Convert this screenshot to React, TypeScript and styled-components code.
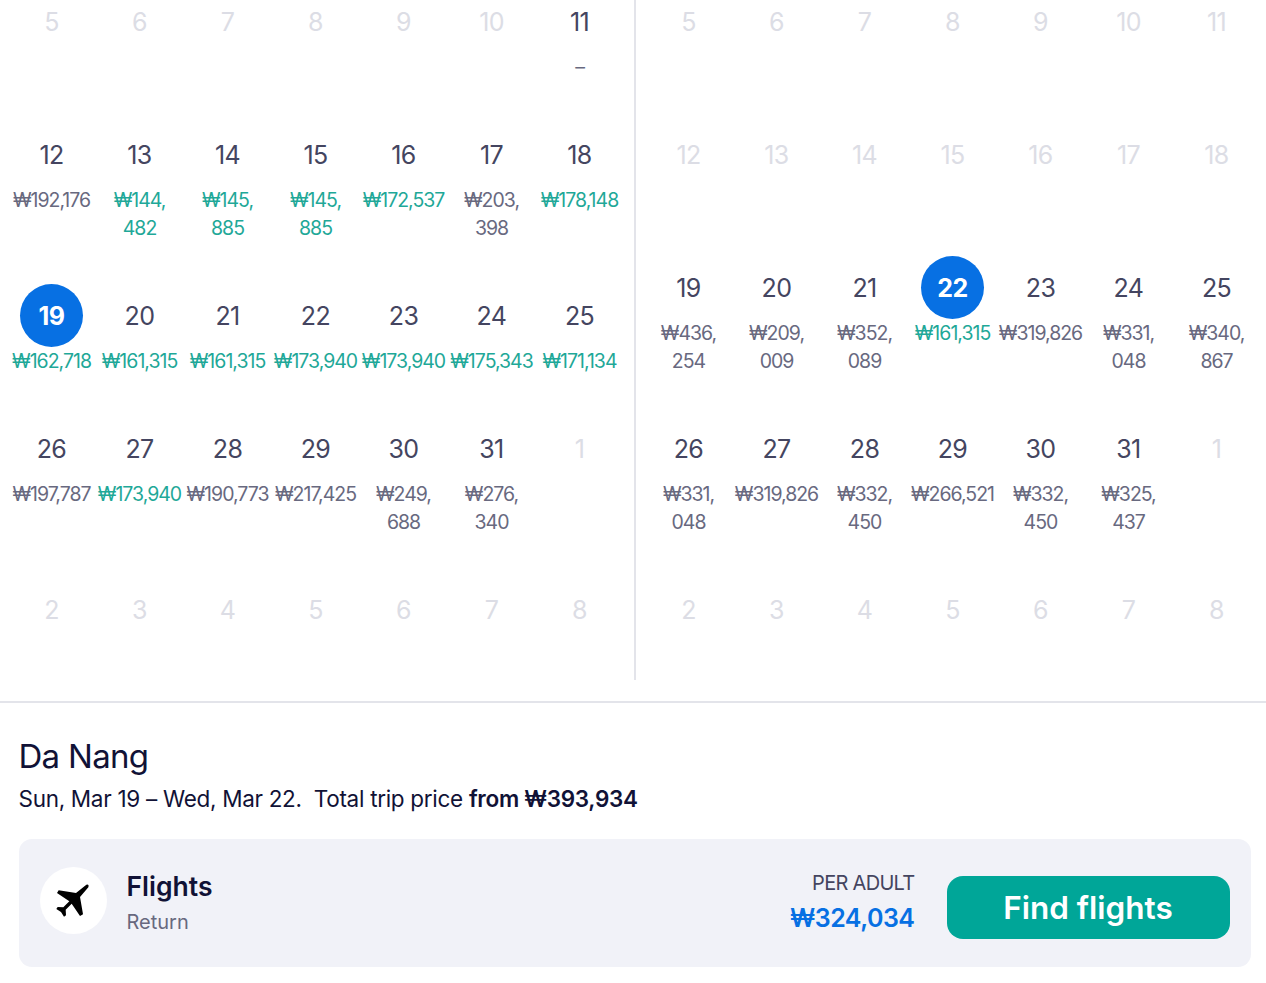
import React from "react";
import styled, { createGlobalStyle } from "styled-components";

const Global = createGlobalStyle`
  html, body { margin: 0; padding: 0; background: #fff; overflow: hidden; }
  body { font-family: "Inter", "Liberation Sans", sans-serif; color: #111236; }
`;

const Page = styled.div`
  width: 1266px;
  height: 983px;
  overflow: hidden;
`;

const Calendars = styled.div`
  display: flex;
  height: 690px;
  margin-top: -10px;
`;

const Month = styled.div<{ $divider?: boolean }>`
  width: 636px;
  height: 690px;
  box-sizing: border-box;
  padding-left: ${(p) => (p.$divider ? "7.5px" : "9.5px")};
  flex: none;
  overflow: hidden;
  border-right: ${(p) => (p.$divider ? "2px solid #e3e4ea" : "none")};
  margin-right: ${(p) => (p.$divider ? "-1px" : "0")};
`;

const Week = styled.div`
  display: grid;
  grid-template-columns: repeat(7, 88px);
  align-content: start;
  box-sizing: border-box;
  min-height: 133px;
  padding-bottom: 42px;
`;

const Day = styled.div`
  display: flex;
  flex-direction: column;
  align-items: center;
`;

const DayNumber = styled.div<{ $state: "off" | "on" | "selected" }>`
  width: 63px;
  height: 63px;
  border-radius: 50%;
  display: flex;
  align-items: center;
  justify-content: center;
  font-size: 25px;
  letter-spacing: -0.6px;
  font-weight: ${(p) => (p.$state === "selected" ? 700 : 400)};
  color: ${(p) =>
    p.$state === "off" ? "#dcdde5" : p.$state === "selected" ? "#fff" : "#444560"};
  background: ${(p) => (p.$state === "selected" ? "#0770e3" : "transparent")};
`;

const Price = styled.div<{ $low?: boolean }>`
  font-size: 19.5px;
  line-height: 28px;
  letter-spacing: -1px;
  white-space: nowrap;
  text-align: center;
  color: ${(p) => (p.$low ? "#1fa898" : "#68697f")};
`;

const Rule = styled.div`
  height: 2px;
  background: #e3e4ea;
  margin-top: 21px;
`;

const Summary = styled.section`
  padding: 31px 16px 0 18.5px;
`;

const City = styled.h2`
  margin: 0;
  font-size: 33px;
  line-height: 44px;
  font-weight: 400;
  letter-spacing: -0.7px;
`;

const Dates = styled.p`
  margin: 5px 0 0;
  font-size: 22.5px;
  line-height: 32px;
  letter-spacing: -0.3px;
  white-space: pre;
  strong { font-weight: 600; }
`;

const Card = styled.div`
  width: 1232px;
  height: 128px;
  margin-top: 24px;
  box-sizing: border-box;
  padding: 0 21px;
  background: #f1f2f8;
  border-radius: 13px;
  display: flex;
  align-items: center;
`;

const IconCircle = styled.div`
  width: 67px;
  height: 67px;
  margin-top: -6px;
  border-radius: 50%;
  background: #fff;
  display: flex;
  align-items: center;
  justify-content: center;
  flex: none;
`;

const Info = styled.div`
  margin-left: 20px;
  flex: 1;
`;

const InfoTitle = styled.div`
  font-size: 26.5px;
  line-height: 34px;
  font-weight: 600;
`;

const InfoSub = styled.div`
  font-size: 20px;
  line-height: 32px;
  margin-top: 3px;
  color: #68697f;
`;

const PriceBlock = styled.div`
  text-align: right;
  margin-right: 32px;
`;

const PerAdult = styled.div`
  font-size: 20px;
  line-height: 30px;
  letter-spacing: -0.7px;
  color: #444560;
`;

const Total = styled.div`
  font-size: 25px;
  line-height: 40px;
  font-weight: 600;
  letter-spacing: -0.5px;
  color: #0770e3;
`;

const FindButton = styled.button`
  width: 283px;
  height: 63px;
  margin-top: 8px;
  border: none;
  border-radius: 16px;
  background: #00a698;
  color: #fff;
  font-family: inherit;
  font-size: 31.5px;
  font-weight: 600;
  padding: 0;
`;

type Cell = { n: number; off?: boolean; sel?: boolean; low?: boolean; p?: string[] };

const off = (ns: number[]): Cell[] => ns.map((n) => ({ n, off: true }));
const c = (n: number, p: string, low = false, sel = false): Cell => ({
  n,
  low,
  sel,
  p: p.split("|"),
});

const left: Cell[][] = [
  [...off([5, 6, 7, 8, 9, 10]), c(11, "–")],
  [
    c(12, "₩192,176"),
    c(13, "₩144,|482", true),
    c(14, "₩145,|885", true),
    c(15, "₩145,|885", true),
    c(16, "₩172,537", true),
    c(17, "₩203,|398"),
    c(18, "₩178,148", true),
  ],
  [
    c(19, "₩162,718", true, true),
    c(20, "₩161,315", true),
    c(21, "₩161,315", true),
    c(22, "₩173,940", true),
    c(23, "₩173,940", true),
    c(24, "₩175,343", true),
    c(25, "₩171,134", true),
  ],
  [
    c(26, "₩197,787"),
    c(27, "₩173,940", true),
    c(28, "₩190,773"),
    c(29, "₩217,425"),
    c(30, "₩249,|688"),
    c(31, "₩276,|340"),
    ...off([1]),
  ],
  off([2, 3, 4, 5, 6, 7, 8]),
];

const right: Cell[][] = [
  off([5, 6, 7, 8, 9, 10, 11]),
  off([12, 13, 14, 15, 16, 17, 18]),
  [
    c(19, "₩436,|254"),
    c(20, "₩209,|009"),
    c(21, "₩352,|089"),
    c(22, "₩161,315", true, true),
    c(23, "₩319,826"),
    c(24, "₩331,|048"),
    c(25, "₩340,|867"),
  ],
  [
    c(26, "₩331,|048"),
    c(27, "₩319,826"),
    c(28, "₩332,|450"),
    c(29, "₩266,521"),
    c(30, "₩332,|450"),
    c(31, "₩325,|437"),
    ...off([1]),
  ],
  off([2, 3, 4, 5, 6, 7, 8]),
];

const MonthGrid = ({ weeks, divider }: { weeks: Cell[][]; divider?: boolean }) => (
  <Month $divider={divider}>
    {weeks.map((week, i) => (
      <Week key={i}>
        {week.map((d) => (
          <Day key={d.n}>
            <DayNumber $state={d.off ? "off" : d.sel ? "selected" : "on"}>{d.n}</DayNumber>
            {d.p?.map((line) => (
              <Price key={line} $low={d.low}>
                {line}
              </Price>
            ))}
          </Day>
        ))}
      </Week>
    ))}
  </Month>
);

const PlaneIcon = () => (
  <svg width="36.7" height="36.7" viewBox="60 65 110 110" fill="#000" aria-hidden="true">
    <path d="M154 73 Q163 71 160 81 L135 110 L144 162 L135 167 L110 130 L92 148 L93 165 L87 169 L78 155 L64 146 L68 140 L85 141 L103 123 L66 98 L71 90 L123 98 Z" />
  </svg>
);

export default function App() {
  return (
    <Page>
      <Global />
      <Calendars>
        <MonthGrid weeks={left} divider />
        <MonthGrid weeks={right} />
      </Calendars>
      <Rule />
      <Summary>
        <City>Da Nang</City>
        <Dates>
          Sun, Mar 19 – Wed, Mar 22.{"  "}Total trip price <strong>from ₩393,934</strong>
        </Dates>
        <Card>
          <IconCircle>
            <PlaneIcon />
          </IconCircle>
          <Info>
            <InfoTitle>Flights</InfoTitle>
            <InfoSub>Return</InfoSub>
          </Info>
          <PriceBlock>
            <PerAdult>PER ADULT</PerAdult>
            <Total>₩324,034</Total>
          </PriceBlock>
          <FindButton>Find flights</FindButton>
        </Card>
      </Summary>
    </Page>
  );
}
